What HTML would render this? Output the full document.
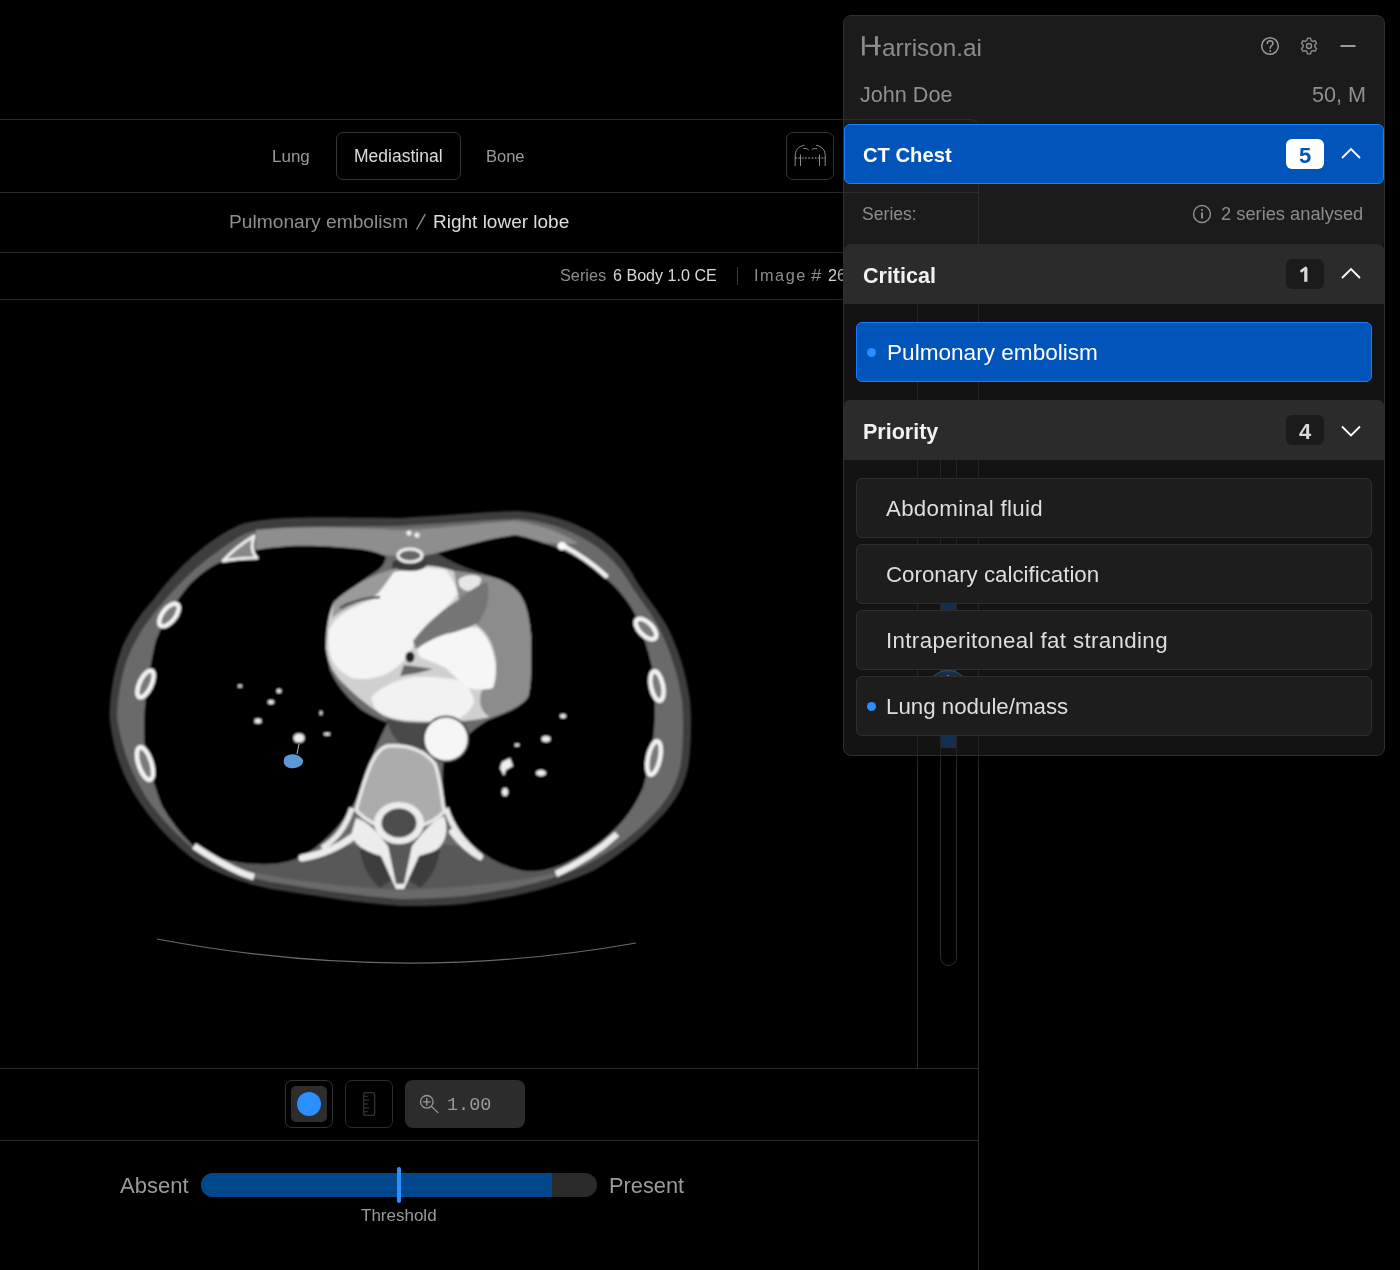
<!DOCTYPE html>
<html><head><meta charset="utf-8">
<style>
html,body{margin:0;padding:0;background:#000;width:1400px;height:1270px;overflow:hidden;font-family:"Liberation Sans",sans-serif}
.t,.itx,.hdt,.bdt{will-change:transform}
.a{position:absolute}
.t{position:absolute;line-height:1;white-space:nowrap}
.hl{position:absolute;height:1px;background:#2c2c2c}
.vl{position:absolute;width:1px;background:#2c2c2c}
.it{position:absolute;left:856px;width:516px;height:60px;background:#1d1d1d;border:1px solid #2f2f2f;border-radius:6px;box-sizing:border-box}
.itx{position:absolute;left:886px;line-height:1;white-space:nowrap;font-size:22.3px;color:#dedede}
.hd{position:absolute;left:844px;width:540px;height:60px;background:#2b2b2b;border-radius:6px 6px 0 0}
.hdt{position:absolute;left:863px;margin-top:1.5px;line-height:1;white-space:nowrap;font-size:21.5px;font-weight:bold;color:#f2f2f2}
.bd{position:absolute;left:1286px;width:38px;height:30px;background:#1b1b1b;border-radius:6px}
.bdt{position:absolute;left:1286px;margin-top:1px;width:38px;text-align:center;line-height:1;font-size:22px;font-weight:bold;color:#d9d9d9}
</style></head>
<body>
<!-- viewer frame -->
<div class="a" style="left:-10px;top:119px;width:989px;height:1160px;border:1px solid #2c2c2c;border-radius:0 8px 0 0;box-sizing:border-box"></div>
<div class="hl" style="left:0;top:192px;width:978px"></div>
<div class="hl" style="left:0;top:252px;width:978px"></div>
<div class="hl" style="left:0;top:299px;width:978px"></div>
<div class="vl" style="left:917px;top:299px;height:770px"></div>
<div class="hl" style="left:0;top:1068px;width:978px"></div>
<div class="hl" style="left:0;top:1140px;width:978px"></div>

<!-- toolbar -->
<div class="t" style="left:272px;top:148px;font-size:17px;color:#9a9a9a">Lung</div>
<div class="a" style="left:336px;top:132px;width:125px;height:48px;border:1px solid #353535;border-radius:7px;box-sizing:border-box"></div>
<div class="t" style="left:354px;top:148px;font-size:17.5px;color:#dcdcdc">Mediastinal</div>
<div class="t" style="left:486px;top:148px;font-size:16.5px;color:#9a9a9a">Bone</div>
<div class="a" style="left:786px;top:132px;width:48px;height:48px;border:1px solid #353535;border-radius:7px;box-sizing:border-box"></div>
<svg class="a" style="left:786px;top:132px" width="48" height="48" viewBox="786 132 48 48" fill="none" stroke="#8a8a8a" stroke-width="1">
<path d="M795.2,166 L795.2,156 C795.2,150 798,146.5 804.5,145.2"/>
<path d="M825.2,166 L825.2,156 C825.2,150 822.4,146.5 815.9,145.2"/>
<path d="M803.2,148.5 C806,148.3 807.5,148.6 808.6,150"/>
<path d="M817.2,148.5 C814.4,148.3 812.9,148.6 811.8,150"/>
<path d="M800.5,154.5 V166 M819.5,154.5 V166"/>
<path d="M795,158 H826" stroke="#a0a0a0" stroke-dasharray="2 1.3" stroke-width="1.2"/>
</svg>

<!-- breadcrumb -->
<div class="t" style="left:229px;top:212px;font-size:19.2px;color:#8e8e8e">Pulmonary embolism</div>
<svg class="a" style="left:410px;top:208px" width="22" height="26" viewBox="410 208 22 26"><path d="M416.9,229 L425,214.6" stroke="#8a8a8a" stroke-width="1.5" stroke-linecap="round"/></svg>
<div class="t" style="left:433px;top:212px;font-size:19px;color:#dedede">Right lower lobe</div>

<!-- series info -->
<div class="t" style="left:560px;top:267.3px;font-size:16.3px;color:#8e8e8e">Series</div>
<div class="t" style="left:613px;top:267.3px;font-size:16.1px;color:#d8d8d8">6 Body 1.0 CE</div>
<div class="a" style="left:737px;top:267px;width:1px;height:18px;background:#3a3a3a"></div>
<div class="t" style="left:753.5px;top:267.3px;font-size:16.3px;letter-spacing:1.5px;color:#8e8e8e">Image</div>
<div class="t" style="left:810.5px;top:267.3px;font-size:16.3px;transform:scaleX(1.15);transform-origin:0 0;color:#8e8e8e">#</div>
<div class="t" style="left:828px;top:267.3px;font-size:16.3px;color:#d8d8d8">26</div>

<svg class="a" style="left:0;top:0" width="917" height="1068" viewBox="0 0 917 1068">
<defs>
<filter id="bl" x="-5%" y="-5%" width="110%" height="110%"><feGaussianBlur stdDeviation="1.1"/></filter>
<filter id="bl3" x="-10%" y="-10%" width="120%" height="120%"><feGaussianBlur stdDeviation="2.2"/></filter>
<clipPath id="vp"><rect x="0" y="300" width="917" height="768"/></clipPath>
</defs>
<g clip-path="url(#vp)">
<path d="M157,939 Q400,985 636,943" fill="none" stroke="#6a6a6a" stroke-width="1.2"/>
<g filter="url(#bl)">
<!-- body outer (skin + fat) -->
<path fill="#3e3e3e" d="M400,518 C440,516 480,512 518,511 C548,513 572,521 593,533 C612,545 626,560 636,580 C646,597 660,612 668,628 C678,648 686,672 690,700 C692,722 691,750 688,768 C683,792 670,808 657,821 C640,840 615,858 593,871 C560,886 520,897 464,904 C440,906 420,906 400,906 C360,903 320,897 271,889 C245,884 218,874 196,861 C175,846 152,822 138,800 C122,776 112,748 109.5,716 C110,690 115,665 123,645 C133,624 142,612 153,600 C165,584 180,566 200,550 C215,538 230,528 245,523 C275,516 320,517 400,518 Z"/>
<!-- muscle layer -->
<path fill="#6b6b6b" d="M400,526 C440,524 480,520 518,519 C545,521 568,529 588,541 C606,552 620,566 630,584 C640,600 653,615 661,632 C670,652 679,676 682,702 C684,722 683,750 680,768 C675,790 662,806 649,819 C632,837 608,853 586,865 C555,879 515,890 464,896 C440,898 420,899 400,899 C360,896 320,890 271,882 C245,877 222,868 203,856 C183,842 160,818 146,797 C131,773 121,746 117,716 C118,692 123,668 131,650 C141,630 150,618 160,606 C172,592 186,576 205,561 C220,550 234,538 250,532 C280,526 320,527 400,526 Z"/>
<!-- anterior muscles lighter -->
<path fill="#8e8e8e" d="M256,530 C300,526 340,527 395,530 C430,530 470,524 515,521 C540,524 560,532 578,543 C560,546 530,540 500,544 C470,550 445,555 420,557 C390,557 360,551 330,548 C300,546 275,550 256,553 Z"/>
<!-- posterior muscles -->
<path fill="#585858" d="M222,865 C270,878 330,886 400,890 C470,888 540,880 580,866 C560,858 520,860 480,850 C440,840 360,840 320,850 C280,858 250,860 222,865 Z"/>
<!-- left lung (image left) -->
<path fill="#000" d="M226,560 C240,552 262,548 290,546 C315,545 340,547 360,549 C372,551 380,553 386,557 C385,563 382,568 374,573 C358,583 342,595 332,610 C326,628 326,650 330,670 C338,688 350,700 362,710 C375,718 385,722 388,722 C384,730 380,738 375,750 C370,764 365,780 358,796 C351,810 343,822 331,834 C319,846 306,856 293,860 C280,865 255,866 229,861 C210,856 199,851 192,845 C180,833 170,820 162,806 C156,790 149,770 144.5,743 C143.5,725 144,712 146,695 C149,675 152,655 156,640 C165,618 178,598 190,584 C202,572 214,564 226,560 Z"/>
<!-- right lung (image right) -->
<path fill="#000" d="M437,553 C460,547 490,538 516,535 C530,538 545,543 558,548 C577,556 595,568 610,582 C623,594 632,606 638,621 C644,637 650,656 653,672 C655,690 655,705 655,715 C654,740 650,762 643,788 C635,806 625,820 614,830 C600,844 581,857 561,865 C545,871 535,872 525,871 C505,867 489,860 469,842 C458,832 450,820 445,808 C442,795 442,780 443,764 C448,752 455,745 464,740 C472,730 485,720 496,717 C510,712 521,706 526,700 C530,690 531,665 531,638 C529,620 526,605 519,592 C510,582 493,577 470,570 C455,566 445,560 437,553 Z"/>
<!-- mediastinal fat above heart -->
<path fill="#444" d="M392,562 C410,558 425,556 437,553 C450,562 470,570 493,577 C505,581 515,586 522,596 C510,588 490,580 470,575 C450,572 420,568 392,570 Z"/>
<!-- heart base -->
<path fill="#d0d0d0" d="M326,649 C326,630 328,615 334,602 C345,592 355,586 366,580 C378,574 390,569 410,566 C425,564 440,566 454,571 C470,573 485,575 500,580 C510,584 518,590 524,602 C529,615 531,630 531,650 C531,670 531,685 528,697 C518,707 505,712 490,717 C475,721 455,722 430,722 C410,722 395,721 384,716 C372,708 360,700 346,686 C335,676 328,665 326,649 Z"/>
<!-- LV lateral wall gray -->
<path fill="#8c8c8c" d="M454,571 C470,573 485,575 500,580 C510,584 518,590 524,602 C529,615 531,630 531,650 C531,670 531,685 528,697 C518,707 505,712 490,717 C480,712 478,700 482,690 C492,688 497,676 496,662 C494,645 488,634 479,627 C470,620 462,608 458,596 Z"/>
<!-- top-left rim darker -->
<path fill="#9a9a9a" d="M334,602 C345,592 355,586 366,580 C378,574 390,569 410,566 C398,576 385,590 370,598 C355,604 342,610 332,618 Z"/>
<!-- RA/RV white -->
<path fill="#f4f4f4" d="M329,630 C336,615 350,608 372,600 C382,590 388,580 394,572 C412,568 430,567 446,570 C452,578 456,586 458,594 C450,604 440,613 430,621 C422,629 416,638 412,648 C406,660 398,668 386,674 C375,679 362,680 352,678 C342,673 334,666 331,657 C328,648 328,638 329,630 Z"/>
<!-- LA white bottom -->
<path fill="#f2f2f2" d="M371,698 C378,688 395,680 414,677 C430,676 450,678 462,681 C470,688 474,695 474,703 C470,711 465,716 458,719 C440,721.5 420,721.5 404,720 C390,718 380,714 375,708 Z"/>
<!-- LV white cavity -->
<path fill="#f6f6f6" d="M417,650 C428,641 438,636 446,633 C460,629 470,627 478,628 C486,635 491,645 494,657 C497,670 496,680 493,688 C485,690 475,690 469,688 C460,682 452,674 446,668 C436,663 426,660 420,657 Z"/>
<path fill="#e6e6e6" d="M459,579 C466,574 476,574 481,578 C482,584 476,590 468,591 C461,590 457,585 459,579 Z"/>
<!-- septum darker band -->
<path fill="#747474" d="M413,641 C424,626 440,612 458,600 C468,592 476,586 487,582 C491,595 487,610 479,622 C469,628 456,632 446,634 C433,638 423,644 416,649 Z"/>
<path fill="none" stroke="#4a4a4a" stroke-width="2.5" d="M340,608 C352,601 366,598 380,597"/>
<ellipse cx="410" cy="657" rx="4.5" ry="5.5" fill="#222"/>
<path fill="#666" d="M404,665 L420,667 L433,669 L418,673 L400,676 Z"/>
<!-- sternum area -->
<path fill="#3a3a3a" d="M393,562 C398,556 420,556 427,562 C428,568 420,571 410,571 C399,571 392,568 393,562 Z"/>
<ellipse cx="410" cy="555.5" rx="12" ry="6.5" fill="#666" stroke="#f0f0f0" stroke-width="3"/>
<circle cx="409" cy="533" r="2.6" fill="#f0f0f0"/>
<circle cx="417" cy="535" r="2.6" fill="#f0f0f0"/>
<!-- anterior ribs -->
<path fill="#888" stroke="#eeeeee" stroke-width="3" stroke-linejoin="round" d="M223,561 C232,551 244,542 254,536 C251,545 252,553 257,558 C245,558 233,559 223,561 Z"/>
<path fill="none" stroke="#f0f0f0" stroke-width="4.5" stroke-linecap="round" d="M562,545 C575,552 592,563 606,576"/>
<ellipse cx="562" cy="546" rx="4.5" ry="4" fill="#fafafa"/>
<!-- mediastinum behind heart -->
<path fill="#4a4a4a" d="M386,718 C400,724 420,725 440,722 C446,728 436,748 420,750 C405,750 392,742 386,718 Z"/>
<!-- aorta -->
<circle cx="446" cy="739" r="23.5" fill="#3a3a3a"/><circle cx="446" cy="739" r="21.5" fill="#f6f6f6"/>
<!-- vertebral body -->
<path fill="#acacac" stroke="#e8e8e8" stroke-width="3.5" d="M387,746 C410,744 426,752 435,764 C440,778 442,796 444,812 C430,826 410,830 395,829 C380,828 366,821 356,810 C360,795 365,778 371,764 C376,753 381,748 387,746 Z"/>
<!-- dark around spinous -->
<path fill="#3c3c3c" d="M372,842 C380,850 388,860 392,880 L380,888 C370,880 362,866 360,850 Z"/>
<path fill="#3c3c3c" d="M428,842 C420,850 412,860 408,880 L420,888 C430,880 438,866 440,850 Z"/>
<!-- posterior elements -->
<path fill="#ececec" d="M356,818 C370,822 378,834 388,846 L396,884 L404,884 L412,846 C422,834 430,822 444,816 C450,832 444,848 432,852 L419,856 L404,889 L396,889 L381,856 C368,852 352,846 352,832 Z"/>
<ellipse cx="399" cy="823" rx="25" ry="21" fill="#ececec"/>
<ellipse cx="399" cy="823" rx="17.5" ry="14.5" fill="#4e4e4e"/>
<!-- posterior ribs -->
<path fill="none" stroke="#e8e8e8" stroke-width="5.5" d="M352,808 C346,826 338,838 322,848"/>
<path fill="none" stroke="#ececec" stroke-width="7" stroke-linecap="round" d="M302,858 C320,855 338,848 354,836"/>
<path fill="none" stroke="#ececec" stroke-width="6" stroke-linecap="round" d="M452,832 C462,845 470,852 480,857"/>
<path fill="none" stroke="#e8e8e8" stroke-width="5.5" d="M446,808 C452,828 466,845 481,857"/>
<path fill="none" stroke="#ececec" stroke-width="6.5" d="M194,846 C215,860 235,872 254,877"/>
<path fill="none" stroke="#ececec" stroke-width="6.5" d="M556,874 C580,863 600,850 617,834"/>
<!-- lateral ribs -->
<g fill="#7a7a7a" stroke="#f4f4f4" stroke-width="4.4">
<ellipse cx="169" cy="615" rx="6.5" ry="13.5" transform="rotate(38 169 615)"/>
<ellipse cx="145.5" cy="684" rx="6" ry="14.5" transform="rotate(25 145.5 684)"/>
<ellipse cx="145" cy="763.5" rx="6.5" ry="17" transform="rotate(-18 145 763.5)"/>
<ellipse cx="646" cy="629" rx="6.5" ry="13" transform="rotate(-45 646 629)"/>
<ellipse cx="657" cy="686" rx="6" ry="15" transform="rotate(-12 657 686)"/>
<ellipse cx="654" cy="758" rx="6" ry="17" transform="rotate(12 654 758)"/>
</g>
<!-- vessels -->
<g fill="#eeeeee">
<ellipse cx="299" cy="738" rx="5.5" ry="4.5"/>
<ellipse cx="258" cy="721" rx="3.5" ry="2.5"/>
<ellipse cx="271" cy="702" rx="3" ry="2"/>
<ellipse cx="240" cy="686" rx="2" ry="1.6"/>
<ellipse cx="279" cy="691" rx="2.5" ry="2"/>
<ellipse cx="321" cy="713" rx="1.3" ry="2"/>
<ellipse cx="327" cy="734" rx="3" ry="1.5"/>
<ellipse cx="546" cy="739" rx="4.5" ry="3"/>
<ellipse cx="541" cy="773" rx="5" ry="3"/>
<path d="M502,762 L510,758 L513,766 L506,770 L504,776 L500,768 Z"/>
<ellipse cx="505" cy="792" rx="3" ry="4"/>
<ellipse cx="563" cy="716" rx="3" ry="2"/>
<ellipse cx="517" cy="745" rx="2.5" ry="1.6"/>
</g>
</g>
<path fill="#5b98d6" d="M285,757 C290,752 300,754 303,760 C304,766 296,769 290,768 C284,767 282,761 285,757 Z"/>
<path d="M299,744 L297,754" stroke="#bbb" stroke-width="1"/>
</g>
</svg>


<!-- scrollbar -->
<div class="a" style="left:940px;top:420px;width:17px;height:546px;border:1px solid #2c2c2c;border-radius:9px;box-sizing:border-box"></div>
<div class="a" style="left:941px;top:580px;width:15px;height:168px;background:#004896"></div>
<div class="a" style="left:926px;top:669.5px;width:44px;height:44px;border-radius:50%;background:#004896;border:1.5px solid #8a8a8a;box-sizing:border-box"></div>
<div class="a" style="left:947px;top:675px;width:2px;height:2px;background:#ddd"></div>

<!-- tools -->
<div class="a" style="left:285px;top:1080px;width:48px;height:48px;border:1px solid #333;border-radius:7px;box-sizing:border-box"></div>
<div class="a" style="left:291px;top:1086px;width:36px;height:36px;background:#2d2d2d;border-radius:5px"></div>
<div class="a" style="left:297px;top:1092px;width:24px;height:24px;background:#2b8fff;border-radius:50%"></div>
<div class="a" style="left:345px;top:1080px;width:48px;height:48px;border:1px solid #2c2c2c;border-radius:7px;box-sizing:border-box"></div>
<svg class="a" style="left:345px;top:1080px" width="48" height="48" viewBox="345 1080 48 48" fill="none" stroke="#333" stroke-width="1.3">
<rect x="363.6" y="1092.6" width="11" height="22.8" rx="2"/>
<path d="M363.6,1096.4 H367.8 M363.6,1100.2 H369 M363.6,1104 H367.8 M363.6,1107.8 H369 M363.6,1111.6 H367.8"/>
</svg>
<div class="a" style="left:405px;top:1080px;width:120px;height:48px;background:#2c2c2c;border-radius:8px"></div>
<svg class="a" style="left:405px;top:1080px" width="40" height="48" viewBox="405 1080 40 48" fill="none" stroke="#999" stroke-width="1.3" stroke-linecap="round">
<circle cx="426.8" cy="1101.8" r="6.3"/>
<path d="M423.4,1101.8 H430.2 M426.8,1098.4 V1105.2 M431.4,1106.4 L438,1112.6"/>
</svg>
<div class="t" style="left:446.5px;top:1096.5px;font-family:'Liberation Mono',monospace;font-size:18.5px;color:#9a9a9a">1.00</div>

<!-- slider -->
<div class="t" style="left:120px;top:1175px;font-size:22px;color:#9a9a9a">Absent</div>
<div class="a" style="left:201px;top:1173px;width:396px;height:24px;background:#2a2a2a;border-radius:12px;overflow:hidden"><div class="a" style="left:0;top:0;width:351px;height:24px;background:#01478c"></div></div>
<div class="a" style="left:397px;top:1167px;width:3.6px;height:36px;background:#2a90ff;border-radius:2px"></div>
<div class="t" style="left:361px;top:1207px;font-size:17px;color:#9a9a9a">Threshold</div>
<div class="t" style="left:609px;top:1175px;font-size:21.8px;color:#9a9a9a">Present</div>

<!-- panel -->
<div class="a" style="left:843px;top:15px;width:542px;height:741px;background:rgba(31,31,31,0.6);border:1px solid #2e2e2e;border-radius:8px;box-sizing:border-box;box-shadow:0 0 14px rgba(0,0,0,0.6)"></div>
<div class="a" style="left:844px;top:16px;width:540px;height:228px;background:rgba(255,255,255,0.035);border-radius:7px 7px 0 0"></div>
<svg class="a" style="left:855px;top:30px" width="140" height="32" viewBox="855 30 140 32">
<g fill="#8c8c8c"><rect x="862" y="36.2" width="2.7" height="19.2"/><rect x="875" y="36.2" width="2.9" height="19.2"/><rect x="865.3" y="44.7" width="15.4" height="2.3"/></g>
</svg>
<div class="t" style="left:882px;top:35.5px;font-size:24.3px;color:#8c8c8c">arrison.ai</div>
<svg class="a" style="left:1255px;top:32px" width="110" height="28" viewBox="1255 32 110 28" fill="none" stroke="#9a9a9a" stroke-width="1.5">
<circle cx="1270" cy="46" r="8.3"/>
<path d="M1267.3,43.6 C1267.3,41.8 1268.6,40.8 1270.1,40.8 C1271.7,40.8 1272.9,41.9 1272.9,43.4 C1272.9,45.4 1270.2,45.6 1270.2,48.2" stroke-linecap="round"/>
<circle cx="1270.2" cy="51" r="0.9" fill="#9a9a9a" stroke="none"/>
<path d="M1340.5,46 H1355.5" stroke-width="2"/>
</svg>
<svg class="a" style="left:1297px;top:34px" width="24" height="24" viewBox="0 0 24 24" fill="none" stroke="#8e8e8e" stroke-width="1.4" stroke-linejoin="round">
<path d="M9.74,6.66 L10.49,4.14 L13.51,4.14 L14.26,6.66 L15.50,7.37 L18.05,6.76 L19.56,9.38 L17.76,11.28 L17.76,12.72 L19.56,14.62 L18.05,17.24 L15.50,16.63 L14.26,17.34 L13.51,19.86 L10.49,19.86 L9.74,17.34 L8.50,16.63 L5.95,17.24 L4.44,14.62 L6.24,12.72 L6.24,11.28 L4.44,9.38 L5.95,6.76 L8.50,7.37 Z"/>
<circle cx="12" cy="12" r="2.5"/>
</svg>
<div class="t" style="left:860px;top:84px;font-size:21.6px;color:#8f8f8f">John Doe</div>
<div class="t" style="left:1312px;top:84px;font-size:21.6px;color:#8f8f8f">50, M</div>

<div class="a" style="left:844px;top:124px;width:540px;height:60px;background:#0054ba;border:1.5px solid #1a7cff;border-radius:6px;box-sizing:border-box"></div>
<div class="t" style="left:863px;top:144.5px;font-size:20.2px;font-weight:bold;color:#fff">CT Chest</div>
<div class="a" style="left:1286px;top:139px;width:38px;height:30px;background:#fff;border-radius:6px"></div>
<div class="bdt" style="top:143.5px;color:#0054ba">5</div>
<svg class="a" style="left:1336px;top:140px" width="30" height="24" viewBox="1336 140 30 24" fill="none" stroke="#fff" stroke-width="1.8"><path d="M1342,158 L1351,149 L1360,158"/></svg>

<div class="t" style="left:862px;top:206px;font-size:17.6px;color:#8c8c8c">Series:</div>
<svg class="a" style="left:1190px;top:202px" width="24" height="24" viewBox="1190 202 24 24" fill="none" stroke="#8c8c8c" stroke-width="1.5">
<circle cx="1202" cy="214" r="8.4"/><path d="M1202,212.5 V218.4" stroke-width="2"/><circle cx="1202" cy="210" r="1.1" fill="#8c8c8c" stroke="none"/>
</svg>
<div class="t" style="left:1221px;top:205px;font-size:18.3px;color:#8c8c8c">2 series analysed</div>

<div class="hd" style="top:244px"></div>
<div class="hdt" style="top:264px">Critical</div>
<div class="bd" style="top:259px"></div>
<svg class="a" style="left:1296px;top:262px" width="16" height="24" viewBox="1296 262 16 24" fill="none" stroke="#d9d9d9" stroke-width="3.2"><path d="M1305.8,268 V281.8"/><path d="M1301.4,271.1 L1305.8,267.9" stroke-linecap="round" stroke-width="2.6"/></svg>
<svg class="a" style="left:1336px;top:260px" width="30" height="24" viewBox="1336 260 30 24" fill="none" stroke="#fff" stroke-width="1.8"><path d="M1342,278 L1351,269 L1360,278"/></svg>

<div class="a" style="left:856px;top:322px;width:516px;height:60px;background:#0054ba;border:1.5px solid #1a7cff;border-radius:6px;box-sizing:border-box"></div>
<div class="a" style="left:866.5px;top:347.5px;width:9px;height:9px;background:#2a8cff;border-radius:50%"></div>
<div class="t" style="left:887px;top:341.5px;font-size:22.6px;color:#fff">Pulmonary embolism</div>

<div class="hd" style="top:400px"></div>
<div class="hdt" style="top:420px">Priority</div>
<div class="bd" style="top:415px"></div>
<div class="bdt" style="top:419.5px">4</div>
<svg class="a" style="left:1336px;top:416px" width="30" height="24" viewBox="1336 416 30 24" fill="none" stroke="#fff" stroke-width="1.8"><path d="M1342,426.5 L1351,435.5 L1360,426.5"/></svg>

<div class="it" style="top:478px"></div>
<div class="itx" style="top:498px;letter-spacing:0.3px">Abdominal fluid</div>
<div class="it" style="top:544px"></div>
<div class="itx" style="top:564px">Coronary calcification</div>
<div class="it" style="top:610px"></div>
<div class="itx" style="top:630px;letter-spacing:0.36px">Intraperitoneal fat stranding</div>
<div class="it" style="top:676px"></div>
<div class="a" style="left:866.5px;top:701.5px;width:9px;height:9px;background:#2a8cff;border-radius:50%"></div>
<div class="itx" style="top:696px">Lung nodule/mass</div>
</body></html>
